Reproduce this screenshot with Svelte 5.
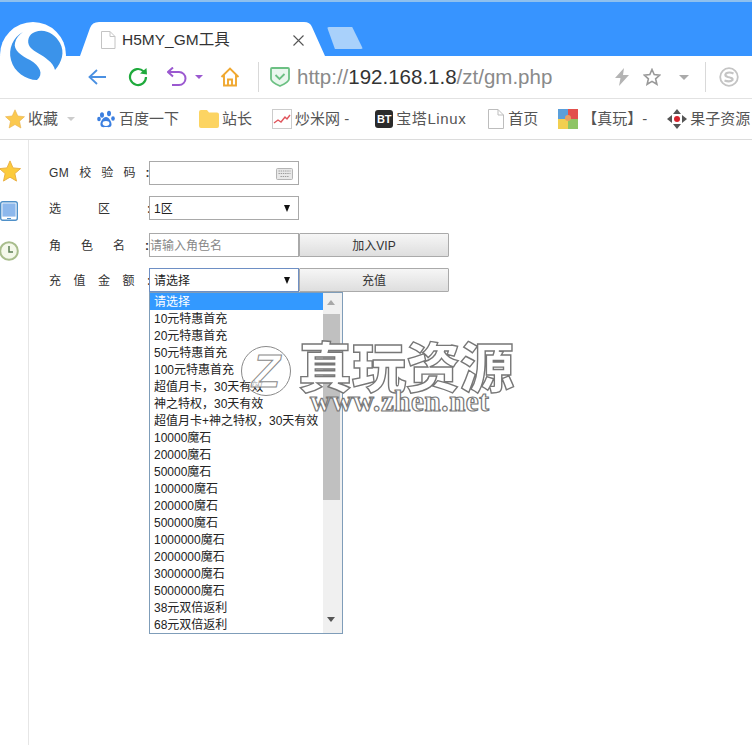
<script>
  const options = [
    "请选择", "10元特惠首充", "20元特惠首充", "50元特惠首充", "100元特惠首充",
    "超值月卡，30天有效", "神之特权，30天有效", "超值月卡+神之特权，30天有效",
    "10000魔石", "20000魔石", "50000魔石", "100000魔石", "200000魔石", "500000魔石",
    "1000000魔石", "2000000魔石", "3000000魔石", "5000000魔石", "38元双倍返利", "68元双倍返利",
  ];
</script>

<div class="page">
  <header class="tabstrip">
    <svg class="logo" viewBox="0 0 66 66">
      <circle cx="33" cy="33" r="33" fill="#fff" />
      <path d="M23 10 C13 15 8 27 11 38 C14 50 26 58 37 58 C44 52 40 44 30 38 C22 34 13 28 15 21 C16 16 19 13 23 10 Z" fill="#3b93ea" />
      <path d="M35 10 C29 12 26 19 30 25 C34 30 43 33 48 38 C52 41 54 44 55 48 C62 40 65 30 60 21 C55 12 45 6 35 10 Z" fill="#3b93ea" />
    </svg>
    <div class="tab">
      <svg class="tab-shape" viewBox="0 0 245 35" preserveAspectRatio="none">
        <path d="M0 35 L10 7 Q12 1 19 1 L224 1 Q230 1 232 6 L245 35 Z" fill="#fff" />
      </svg>
      <svg class="tab-doc" viewBox="0 0 16 18">
        <path d="M1.5 .5 H10 L15 5.5 V17.5 H1.5 Z M10 .5 V5.5 H15" fill="#fff" stroke="#c4c4c4" />
      </svg>
      <span class="tab-title">H5MY_GM工具</span>
      <svg class="tab-close" viewBox="0 0 11 11"><path d="M.5 .5 L10.5 10.5 M10.5 .5 L.5 10.5" stroke="#555" stroke-width="1.1" /></svg>
    </div>
    <div class="newtab"></div>
  </header>

  <nav class="toolbar">
    <svg class="i-back" viewBox="0 0 18 18"><path d="M9 2 L1.5 9 L9 16 M1.5 9 H18" fill="none" stroke="#4a90e2" stroke-width="1.8" /></svg>
    <svg class="i-reload" viewBox="0 0 20 20"><path d="M15.5 4.2 A8 8 0 1 0 18 10" fill="none" stroke="#1faa3c" stroke-width="2.2" /><path d="M12 6.5 L19 7.5 L18.5 1 Z" fill="#1faa3c" /></svg>
    <svg class="i-undo" viewBox="0 0 20 20"><path d="M2 5 H12 A6.5 6.5 0 0 1 12 18 H5" fill="none" stroke="#9b59d0" stroke-width="2" /><path d="M6 0.5 L1 5 L6 9.5" fill="none" stroke="#9b59d0" stroke-width="2" /></svg>
    <span class="caret purple"></span>
    <svg class="i-home" viewBox="0 0 20 20"><path d="M1.5 10 L10 1.5 L18.5 10 M4 8 V18.5 H16 V8 M8 18 V12.5 H12 V18" fill="none" stroke="#f0a830" stroke-width="1.9" /></svg>
    <span class="sep first"></span>
    <svg class="i-shield" viewBox="0 0 20 20"><path d="M1 2 Q1 1 2 1 H18 Q19 1 19 2 V12 Q19 15 10 19 Q1 15 1 12 Z" fill="#eaf7ee" stroke="#6cc083" stroke-width="1.8" /><path d="M5.5 8 L9.5 12 L14.5 7" fill="none" stroke="#6cc083" stroke-width="1.8" /></svg>
    <div class="url"><span>http://</span><b>192.168.1.8</b><span>/zt/gm.php</span></div>
    <svg class="i-bolt" viewBox="0 0 14 18"><path d="M9 0 L0 10 H5.5 L4 18 L14 7 H8 Z" fill="#b4b4b4" /></svg>
    <svg class="i-star" viewBox="0 0 18 18"><path d="M9 1.5 L11.2 6.6 L16.8 7.1 L12.6 10.8 L13.9 16.3 L9 13.4 L4.1 16.3 L5.4 10.8 L1.2 7.1 L6.8 6.6 Z" fill="none" stroke="#999" stroke-width="1.6" /></svg>
    <span class="caret grey"></span>
    <span class="sep second"></span>
    <svg class="i-sogou" viewBox="0 0 20 20"><circle cx="10" cy="10" r="8.8" fill="none" stroke="#c4c4c4" stroke-width="1.8" /><path d="M14.5 6.5 Q10 4.5 7 6.5 Q5 9 9 10 Q14.5 11 13.5 13 Q11 15.5 5.5 13.5" fill="none" stroke="#c4c4c4" stroke-width="2.2" /></svg>
  </nav>

  <nav class="bookmarks">
    <svg class="b-star" viewBox="0 0 20 20"><path d="M10 .8 L12.8 7 L19.5 7.7 L14.5 12.2 L15.9 19 L10 15.5 L4.1 19 L5.5 12.2 L.5 7.7 L7.2 7 Z" fill="#fbc94f" stroke="#e8b04a" stroke-width=".6" /></svg>
    <span class="b-fav">收藏</span>
    <span class="caret pale"></span>
    <svg class="b-paw" viewBox="0 0 18 18">
      <ellipse cx="5" cy="5" rx="2" ry="2.8" fill="#3b7fe0" /><ellipse cx="12" cy="3.5" rx="2" ry="2.8" fill="#3b7fe0" />
      <ellipse cx="2" cy="9" rx="1.8" ry="2.3" fill="#3b7fe0" /><ellipse cx="16" cy="8.5" rx="1.8" ry="2.3" fill="#3b7fe0" />
      <path d="M9 7 C6 7 3 12 3.5 15 C4 18 7 17 9 17 C11 17 14 18 14.5 15 C15 12 12 7 9 7 Z" fill="#3b7fe0" />
      <ellipse cx="9" cy="13.5" rx="3.4" ry="2.4" fill="#fff" />
    </svg>
    <span class="b-baidu">百度一下</span>
    <svg class="b-folder" viewBox="0 0 20 18"><path d="M0 2 Q0 0 2 0 H8 L10 2.5 H18 Q20 2.5 20 4.5 V16 Q20 18 18 18 H2 Q0 18 0 16 Z" fill="#fcd462" /></svg>
    <span class="b-zhan">站长</span>
    <svg class="b-chart" viewBox="0 0 20 20"><rect x=".5" y=".5" width="19" height="19" fill="#fff" stroke="#ccc" /><path d="M2 14 L6 11 L9 13 L13 8 L15 10 L18 6" fill="none" stroke="#e0555c" stroke-width="1.4" /></svg>
    <span class="b-chao">炒米网 -</span>
    <span class="b-bt">BT</span>
    <span class="b-baota">宝塔Linux</span>
    <svg class="b-doc" viewBox="0 0 16 20"><path d="M.5 .5 H10 L15.5 6 V19.5 H.5 Z M10 .5 V6 H15.5" fill="#fff" stroke="#bdbdbd" /></svg>
    <span class="b-home">首页</span>
    <svg class="b-tiles" viewBox="0 0 20 20">
      <rect width="10" height="10" fill="#5a9fdb" /><rect x="10" width="10" height="10" fill="#e2504c" />
      <rect y="10" width="10" height="10" fill="#f2cf50" /><rect x="10" y="10" width="10" height="10" fill="#8fc565" />
      <circle cx="10" cy="9" r="3" fill="#e8a060" />
    </svg>
    <span class="b-zhen">【真玩】-</span>
    <svg class="b-guozi" viewBox="0 0 20 20">
      <path d="M10 0 L14 5 H6 Z M10 20 L14 15 H6 Z M0 10 L5 6 V14 Z M20 10 L15 6 V14 Z" fill="#555" />
      <circle cx="10" cy="10" r="3" fill="#d5222c" />
    </svg>
    <span class="b-gz">果子资源</span>
  </nav>

  <div class="content">
    <aside class="side">
      <svg class="s-star" viewBox="0 0 24 24"><path d="M12 1 L15.3 8.6 L23.5 9.4 L17.3 14.8 L19.1 23 L12 18.7 L4.9 23 L6.7 14.8 L.5 9.4 L8.7 8.6 Z" fill="#fccb3c" stroke="#e8ad3f" /></svg>
      <svg class="s-tablet" viewBox="0 0 18 20"><rect x=".7" y=".7" width="16.6" height="18.6" rx="2" fill="#fff" stroke="#4f90c8" stroke-width="1.4" /><rect x="2.4" y="2.4" width="13.2" height="13.2" fill="#8db8ec" /><rect x="7" y="17" width="4" height="1" fill="#4f90c8" /></svg>
      <svg class="s-clock" viewBox="0 0 20 20"><circle cx="10" cy="10" r="8.8" fill="#f4f8ea" stroke="#a8bd8c" stroke-width="2" /><path d="M10 5 V11 H14" fill="none" stroke="#5b7d54" stroke-width="1.5" /></svg>
    </aside>

    <form class="form">
      <div class="row r1">
        <div class="label g10"><span class="gm">GM</span><span>校</span><span>验</span><span>码</span><i>:</i></div>
        <div class="field input">
          <svg class="kbd" viewBox="0 0 17 12"><rect x=".5" y=".5" width="16" height="11" rx="1" fill="#e8e8e8" stroke="#b5b5b5" /><path d="M2.5 3 H14.5 M2.5 5.5 H14.5 M4.5 8.5 H12.5" stroke="#9c9c9c" stroke-dasharray="1.4 .8" /></svg>
        </div>
      </div>
      <div class="row r2">
        <div class="label g37"><span>选</span><span>区</span><i>:</i></div>
        <div class="field select"><span>1区</span><b class="tri"></b></div>
      </div>
      <div class="row r3">
        <div class="label g20"><span>角</span><span>色</span><span>名</span><i>:</i></div>
        <div class="field input placeholder">请输入角色名</div>
        <div class="btn">加入VIP</div>
      </div>
      <div class="row r4">
        <div class="label g12"><span>充</span><span>值</span><span>金</span><span>额</span><i>:</i></div>
        <div class="field select open">
          <span>请选择</span><b class="tri"></b>
          <div class="dropdown">
            <ul>
              {#each options as o, i}
                <li class:sel={i === 0}>{o}</li>
              {/each}
            </ul>
            <div class="scroll">
              <b class="up"></b>
              <div class="thumb"></div>
              <b class="down"></b>
            </div>
          </div>
        </div>
        <div class="btn">充值</div>
      </div>
    </form>

    <div class="watermark">
      <div class="wm-circle"><span>Z</span></div>
      <div class="wm-text">
        <div class="wm-cn">真玩资源</div>
        <div class="wm-en">www.zhen.net</div>
      </div>
    </div>
  </div>
</div>

<style>
  :global(body) {
    margin: 0;
    background: #fff;
    overflow: hidden;
  }
  .page {
    width: 752px;
    height: 745px;
    overflow: hidden;
    position: relative;
    font-family: "Liberation Sans", "Noto Sans CJK SC", sans-serif;
    color: #333;
  }
  svg {
    display: block;
    flex: none;
  }

  .tabstrip {
    height: 54px;
    border-top: 2px solid #8fc0ee;
    background: #3794ff;
    display: flex;
    align-items: flex-end;
    padding-left: 80px;
  }
  .logo {
    position: absolute;
    left: 0;
    top: 22px;
    width: 66px;
    height: 66px;
    z-index: 2;
  }
  .tab {
    position: relative;
    width: 245px;
    height: 35px;
    display: flex;
    align-items: center;
    padding-top: 2px;
    box-sizing: border-box;
  }
  .tab-shape {
    position: absolute;
    inset: 0;
    width: 100%;
    height: 100%;
  }
  .tab-doc {
    position: relative;
    width: 16px;
    height: 18px;
    margin: 0 0 0 20px;
  }
  .tab-title {
    position: relative;
    font-size: 15.5px;
    line-height: 20px;
    margin-left: 6px;
    color: #333;
  }
  .tab-close {
    position: absolute;
    left: 213px;
    top: 14px;
    width: 11px;
    height: 11px;
  }
  .newtab {
    width: 36px;
    height: 22px;
    margin: 0 0 7px 2px;
    background: #a9d1fb;
    clip-path: polygon(0 0, 70% 0, 100% 100%, 22% 100%);
    border-radius: 2px;
  }

  .toolbar {
    height: 42px;
    border-bottom: 1px solid #e2e2e2;
    display: flex;
    align-items: center;
  }
  .i-back { width: 18px; height: 18px; margin-left: 88px; }
  .i-reload { width: 20px; height: 20px; margin-left: 22px; }
  .i-undo { width: 20px; height: 20px; margin-left: 19px; }
  .caret {
    width: 0;
    height: 0;
    border-left: 4px solid transparent;
    border-right: 4px solid transparent;
    border-top: 4px solid #999;
    flex: none;
  }
  .caret.purple { border-top-color: #9b59d0; margin-left: 8px; }
  .i-home { width: 20px; height: 20px; margin-left: 17px; }
  .sep {
    width: 1px;
    height: 30px;
    background: #d9d9d9;
    flex: none;
  }
  .sep.first { margin-left: 18px; }
  .i-shield { width: 20px; height: 20px; margin-left: 11px; }
  .url {
    font-size: 20.5px;
    line-height: 28px;
    margin-left: 7px;
    color: #8a8a8a;
    white-space: nowrap;
    width: 318px;
  }
  .url b {
    font-weight: normal;
    color: #333;
  }
  .i-bolt { width: 14px; height: 18px; }
  .i-star { width: 18px; height: 18px; margin-left: 14px; }
  .caret.grey { border-left-width: 5px; border-right-width: 5px; border-top-width: 5px; border-top-color: #aaa; margin-left: 18px; }
  .sep.second { margin-left: 16px; }
  .i-sogou { width: 20px; height: 20px; margin-left: 13px; }

  .bookmarks {
    height: 40px;
    border-bottom: 1px solid #dcdcdc;
    display: flex;
    align-items: center;
    font-size: 15px;
    line-height: 20px;
    color: #555;
    white-space: nowrap;
  }
  .b-star { width: 20px; height: 20px; margin-left: 5px; }
  .b-fav { margin-left: 3px; }
  .caret.pale { border-top-color: #ccc; margin-left: 9px; }
  .b-paw { width: 18px; height: 18px; margin-left: 22px; }
  .b-baidu { margin-left: 4px; }
  .b-folder { width: 20px; height: 18px; margin-left: 20px; }
  .b-zhan { margin-left: 3px; }
  .b-chart { width: 20px; height: 20px; margin-left: 20px; }
  .b-chao { margin-left: 3px; }
  .b-bt {
    width: 18px;
    height: 18px;
    margin-left: 26px;
    background: #2b2b2b;
    border-radius: 3px;
    color: #fff;
    font-size: 11px;
    line-height: 18px;
    text-align: center;
    font-weight: bold;
  }
  .b-baota { margin-left: 3px; letter-spacing: .6px; }
  .b-doc { width: 16px; height: 20px; margin-left: 22px; }
  .b-home { margin-left: 4px; }
  .b-tiles { width: 20px; height: 20px; margin-left: 20px; }
  .b-zhen { margin-left: 4px; }
  .b-guozi { width: 20px; height: 20px; margin-left: 20px; }
  .b-gz { margin-left: 3px; }

  .content {
    position: relative;
    display: flex;
    height: 605px;
  }
  .side {
    width: 28px;
    border-right: 1px solid #e6e6e6;
    flex: none;
    display: flex;
    flex-direction: column;
    align-items: flex-start;
  }
  .s-star { width: 22px; height: 22px; margin: 20px 0 0 -1px; }
  .s-tablet { width: 18px; height: 20px; margin: 19px 0 0 0; }
  .s-clock { width: 20px; height: 20px; margin: 20px 0 0 -1px; }

  .form {
    margin-left: 20px;
    padding-top: 21px;
    font-size: 12px;
    color: #333;
  }
  .row {
    display: flex;
    align-items: center;
    height: 24px;
  }
  .r2 { margin-top: 11px; }
  .r3 { margin-top: 13px; }
  .r4 { margin-top: 11px; }
  .r2 .label, .r3 .label, .r4 .label { padding-top: 2px; }
  .label {
    width: 100px;
    display: flex;
    line-height: 16px;
    flex: none;
  }
  .label i {
    font-style: normal;
    font-weight: bold;
    margin-left: auto;
    padding-right: 1px;
  }
  .gm { letter-spacing: .5px; }
  .g10 { gap: 10px; }
  .g37 { gap: 37px; }
  .g20 { gap: 20px; }
  .g12 { gap: 12.5px; }
  .field {
    position: relative;
    width: 150px;
    height: 24px;
    box-sizing: border-box;
    border: 1px solid #a9a9a9;
    background: #fff;
    display: flex;
    align-items: center;
    flex: none;
    line-height: 16px;
    padding-top: 2px;
  }
  .placeholder {
    color: #888;
    padding-left: 0;
  }
  .select {
    padding-left: 4px;
    color: #222;
  }
  .select.open {
    border-color: #6e8fc4;
  }
  .tri {
    position: absolute;
    right: 8px;
    top: 8px;
    width: 0;
    height: 0;
    border-left: 3.5px solid transparent;
    border-right: 3.5px solid transparent;
    border-top: 7px solid #111;
  }
  .kbd {
    position: absolute;
    right: 5px;
    top: 6px;
    width: 17px;
    height: 12px;
  }
  .btn {
    width: 150px;
    height: 24px;
    box-sizing: border-box;
    border: 1px solid #aaa;
    border-radius: 1px;
    background: linear-gradient(#f6f6f6, #dedede);
    text-align: center;
    line-height: 25px;
    color: #333;
    flex: none;
  }
  .dropdown {
    position: absolute;
    left: -1px;
    top: 23px;
    width: 194px;
    height: 342px;
    box-sizing: border-box;
    border: 1px solid #7f9db9;
    background: #fff;
    display: flex;
    z-index: 1;
  }
  ul {
    list-style: none;
    margin: 0;
    padding: 0;
    width: 173px;
    flex: none;
  }
  li {
    height: 17px;
    line-height: 19px;
    padding-left: 4px;
    white-space: nowrap;
    color: #222;
  }
  li.sel {
    background: #3399ff;
    color: #fff;
  }
  .scroll {
    position: relative;
    flex: 1;
    background: #f0f0f0;
    display: flex;
    flex-direction: column;
    align-items: flex-start;
  }
  .thumb {
    width: 17px;
    height: 186px;
    margin-top: 9px;
    background: #c0c0c0;
  }
  .up, .down {
    width: 0;
    height: 0;
    margin-left: 4px;
    border-left: 4.5px solid transparent;
    border-right: 4.5px solid transparent;
  }
  .up {
    margin-top: 7px;
    border-bottom: 5px solid #a8a8a8;
  }
  .down {
    margin-top: 117px;
    border-top: 5px solid #555;
  }

  .watermark {
    position: absolute;
    left: 241px;
    top: 202px;
    display: flex;
    pointer-events: none;
    z-index: 3;
  }
  .wm-circle {
    width: 50px;
    height: 50px;
    margin-top: 4px;
    box-sizing: border-box;
    border: 1px solid #8a8a8a;
    border-radius: 50%;
    display: flex;
    align-items: center;
    justify-content: center;
  }
  .wm-circle span {
    font: italic bold 46px/1 "Liberation Sans", sans-serif;
    color: rgba(255, 255, 255, .7);
    -webkit-text-stroke: 1px #8a8a8a;
  }
  .wm-text {
    margin-left: 7px;
    margin-top: -2px;
  }
  .wm-cn {
    font: 900 54px/50px "Noto Sans CJK SC", sans-serif;
    color: #fff;
    -webkit-text-stroke: 1.4px #777;
    width: 216px;
    white-space: nowrap;
  }
  .wm-en {
    font: bold 29px/22px "Liberation Serif", serif;
    color: #fff;
    -webkit-text-stroke: 1.2px #777;
    margin-left: 12px;
    white-space: nowrap;
    letter-spacing: .6px;
  }
</style>
